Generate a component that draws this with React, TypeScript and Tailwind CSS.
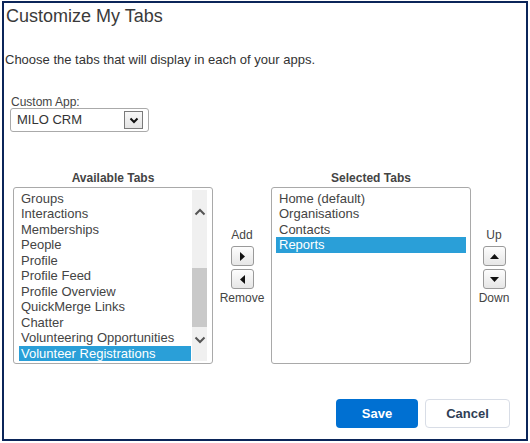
import React from "react";

const available = [
  "Groups",
  "Interactions",
  "Memberships",
  "People",
  "Profile",
  "Profile Feed",
  "Profile Overview",
  "QuickMerge Links",
  "Chatter",
  "Volunteering Opportunities",
  "Volunteer Registrations",
];

const selected = ["Home (default)", "Organisations", "Contacts", "Reports"];

const Tri = ({ dir }: { dir: "right" | "left" | "up" | "down" }) => {
  const pts = {
    right: "2,0 7,4.5 2,9",
    left: "7,0 2,4.5 7,9",
    up: "0,7 4.5,2 9,7",
    down: "0,2 4.5,7 9,2",
  }[dir];
  return (
    <svg width="9" height="9" viewBox="0 0 9 9">
      <polygon points={pts} fill="#111" />
    </svg>
  );
};

const ArrowButton = ({ dir }: { dir: "right" | "left" | "up" | "down" }) => (
  <div className="w-[23px] h-[20px] flex items-center justify-center rounded-[3px] border border-[#9a9a9a] bg-gradient-to-b from-[#fdfdfd] to-[#e6e6e6]">
    <Tri dir={dir} />
  </div>
);

const Chevron = ({ up }: { up?: boolean }) => (
  <svg width="12" height="8" viewBox="0 0 12 8" className="mx-auto block">
    <polyline
      points={up ? "1.5,6.5 6,2 10.5,6.5" : "1.5,1.5 6,6 10.5,1.5"}
      fill="none"
      stroke="#555"
      strokeWidth="2"
    />
  </svg>
);

const Option = ({ label, active, pad }: { label: string; active: boolean; pad: string }) => (
  <div
    className={`${pad} h-[15.5px] leading-[15.5px] whitespace-nowrap ${
      active ? "bg-[#2a9fd8] text-white" : "text-[#444]"
    }`}
  >
    {label}
  </div>
);

const SideControls = ({
  top,
  bottom,
  first,
  second,
}: {
  top: string;
  bottom: string;
  first: "right" | "up";
  second: "left" | "down";
}) => (
  <div className="flex flex-col items-center pt-[57px] text-[12px] text-[#444]">
    <div className="leading-[14px] mb-[4px]">{top}</div>
    <ArrowButton dir={first} />
    <div className="h-[3px]" />
    <ArrowButton dir={second} />
    <div className="leading-[14px] mt-[2px]">{bottom}</div>
  </div>
);

export default function App() {
  return (
    <div className="w-[530px] h-[443px] bg-white font-['Liberation_Sans',Arial,sans-serif] text-[#333]">
      <div className="ml-[2px] mt-[1px] w-[526px] h-[440px] border-2 border-[#0b2559] flex flex-col">
        <h1 className="ml-[2px] mt-[2px] text-[18px] leading-[22px] text-[#3a3a3a]">
          Customize My Tabs
        </h1>
        <p className="ml-[1px] mt-[25px] text-[13px] leading-[16px]">
          Choose the tabs that will display in each of your apps.
        </p>
        <label className="ml-[7px] mt-[29px] text-[12px] leading-[11px] text-[#444]">
          Custom App:
        </label>
        <div className="ml-[6px] w-[139px] h-[24px] border border-[#aaa] rounded-[3px] flex items-center justify-between pl-[6px] pr-[5px]">
          <span className="text-[13px] text-[#333]">MILO CRM</span>
          <div className="w-[19px] h-[18px] border border-[#7a7a7a] bg-gradient-to-b from-[#f8f8f8] to-[#e4e4e4] flex items-center justify-center">
            <svg width="10" height="7" viewBox="0 0 10 7">
              <polyline points="1.5,1.5 5,5 8.5,1.5" fill="none" stroke="#111" strokeWidth="2" />
            </svg>
          </div>
        </div>

        <div className="mt-[39px] ml-[9px] flex">
          <div className="w-[200px] flex flex-col">
            <div className="text-center text-[12px] font-bold leading-[14px] mb-[2px] text-[#444]">
              Available Tabs
            </div>
            <div className="h-[177px] border border-[#a9a9a9] rounded-[3px] flex text-[13px]">
              <div className="flex-1 pl-[5px] pr-[1px] pt-[2.5px]">
                {available.map((t) => (
                  <Option key={t} label={t} active={t === "Volunteer Registrations"} pad="pl-[2px]" />
                ))}
              </div>
              <div className="w-[15px] my-[2px] mr-[5px] bg-[#f0f0f0] flex flex-col pt-[18px]">
                <Chevron up />
                <div className="mt-[52px] h-[59px] bg-[#c9c9c9]" />
                <div className="mt-[9px]">
                  <Chevron />
                </div>
              </div>
            </div>
          </div>

          <div className="w-[58px]">
            <SideControls top="Add" bottom="Remove" first="right" second="left" />
          </div>

          <div className="w-[200px] flex flex-col">
            <div className="text-center text-[12px] font-bold leading-[14px] mb-[2px] text-[#444]">
              Selected Tabs
            </div>
            <div className="h-[177px] border border-[#a9a9a9] rounded-[3px] px-[4px] pt-[2.5px] text-[13px]">
              {selected.map((t) => (
                <Option key={t} label={t} active={t === "Reports"} pad="pl-[3px]" />
              ))}
            </div>
          </div>

          <div className="w-[46px]">
            <SideControls top="Up" bottom="Down" first="up" second="down" />
          </div>
        </div>

        <div className="mt-[35px] mr-[16px] flex justify-end gap-[7px] text-[13px] font-bold">
          <button className="w-[82px] h-[29px] rounded-[4px] bg-[#0070d2] text-white">Save</button>
          <button className="w-[85px] h-[29px] rounded-[4px] border border-[#d8dde6] bg-white text-[#2f3e55]">
            Cancel
          </button>
        </div>
      </div>
    </div>
  );
}
